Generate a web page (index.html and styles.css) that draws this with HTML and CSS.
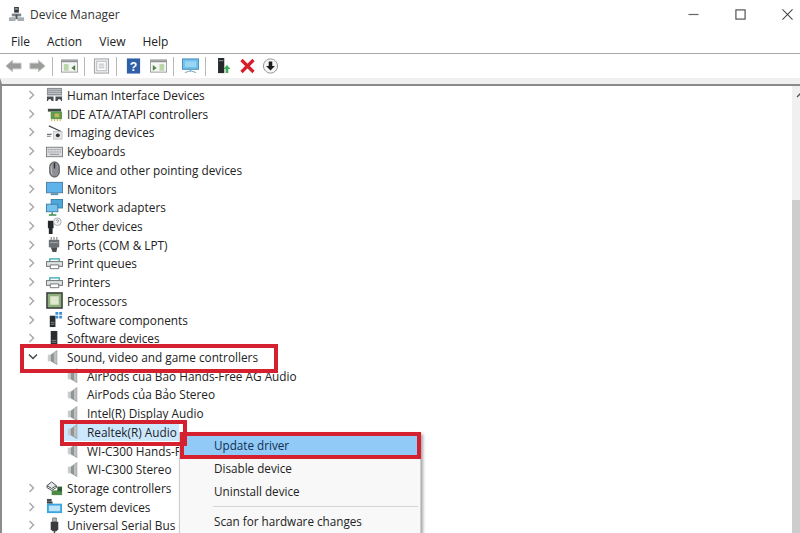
FILE: index.html
```html
<!DOCTYPE html>
<html lang="en">
<head>
<meta charset="utf-8">
<title>Device Manager</title>
<link rel="stylesheet" href="styles.css">
</head>
<body>
<svg class="defs" width="0" height="0" aria-hidden="true">
  <symbol id="chev" viewBox="0 0 8 10"><path d="M1.5 1l4 4-4 4" fill="none" stroke="#a6a6a6" stroke-width="1.4"/></symbol>
  <symbol id="spk" viewBox="0 0 16 18"><path d="M3 6h3v7H3z" fill="#c9cccc"/><path d="M6 6l7-5v16l-7-4z" fill="#8f9494"/><path d="M9.500 4l3-2v14l-3-2z" fill="#bcc0c0"/></symbol>
  <symbol id="hid" viewBox="0 0 18 18"><rect x="1" y="2" width="16" height="8" fill="#8b9096"/><path d="M2 4h14M2 6h14M2 8h14" stroke="#d5d8da" stroke-width=".8"/><path d="M1 11h7v5H6l-1-2-2 0-1 2H1zM10 11h7v5h-1l-1-2h-2l-1 2h-2z" fill="#4a4e52"/></symbol>
  <symbol id="ide" viewBox="0 0 18 18"><rect x="2" y="4" width="14" height="3" fill="#3d4a44"/><rect x="5" y="7" width="12" height="8" fill="#5f9a4e"/><rect x="9" y="9" width="5" height="4" fill="#c2b65a"/><path d="M6 15v2M9 15v2M12 15v2M15 15v2" stroke="#c7a93a"/></symbol>
  <symbol id="img" viewBox="0 0 18 18"><path d="M3 2l13 6" stroke="#4a4e52" stroke-width="1.2"/><path d="M1 11h5M1 13h4" stroke="#777" stroke-width="1.2"/><rect x="8" y="8" width="9" height="8" fill="#e4e6e8" stroke="#a8acb0" stroke-width=".6"/><circle cx="12.5" cy="12" r="2" fill="#2d3134"/></symbol>
  <symbol id="kbd" viewBox="0 0 18 18"><rect x=".5" y="4.500" width="17" height="10" fill="#d9dbdd" stroke="#7b7f83"/><path d="M2 7h14M2 9.500h14" stroke="#8d9195" stroke-dasharray="1 .6"/><path d="M4 12h10" stroke="#8d9195"/></symbol>
  <symbol id="mouse" viewBox="0 0 18 18"><rect x="4" y="1" width="10" height="16" rx="5" fill="#8d9195" stroke="#3f4347"/><path d="M9 2v6" stroke="#2e3235" stroke-width="1.5"/><path d="M5.500 5c0 6 0 6 1 9" stroke="#c9cccf" fill="none"/></symbol>
  <symbol id="mon" viewBox="0 0 18 18"><rect x=".5" y="2.500" width="17" height="11" fill="#5eb4ea" stroke="#4a7fa6"/><path d="M5 15h8" stroke="#5b8fb0" stroke-width="2"/></symbol>
  <symbol id="net" viewBox="0 0 18 18"><rect x="5.500" y=".5" width="12" height="9" fill="#4fa8dc" stroke="#3a7fa8"/><rect x=".5" y="5.500" width="12" height="8" fill="#76c4ee" stroke="#3a7fa8"/><path d="M6.500 14v3M3 17h8" stroke="#3f8f4a" stroke-width="1.500"/></symbol>
  <symbol id="other" viewBox="0 0 18 18"><path d="M2 4h6v8H7v6H3v-6H2z" fill="#24282a"/><circle cx="12" cy="5" r="4" fill="#eef0f2" stroke="#9a9ea2" stroke-width=".8"/><path d="M10.800 4c.4-1.500 2.800-1.200 2.400.3-.2.800-1.200.8-1.200 1.700" fill="none" stroke="#6f7377" stroke-width=".8"/></symbol>
  <symbol id="port" viewBox="0 0 18 18"><path d="M5 1h1v3H5zM8 1h1v3H8zM11 1h1v3h-1z" fill="#66696c"/><rect x="3" y="4" width="11" height="8" fill="#6c7073"/><path d="M4 7h9" stroke="#a7aaad"/><path d="M5 12h7l-1 5H7z" fill="#4a4d50"/></symbol>
  <symbol id="prn" viewBox="0 0 18 18"><path d="M4 7V4h10v3" fill="#f2fafb" stroke="#35a4ae" stroke-width="1.300"/><rect x=".5" y="7" width="17" height="5" fill="#dfe2e3" stroke="#6d7174"/><path d="M4.500 10.500h9v4h-9z" fill="#fff" stroke="#6d7174"/></symbol>
  <symbol id="cpu" viewBox="0 0 18 18"><rect x="1" y="1" width="16" height="16" fill="#8fae7c" stroke="#2f3431" stroke-width="1.500"/><rect x="4.500" y="4.500" width="9" height="9" fill="#dfe8cf"/></symbol>
  <symbol id="swc" viewBox="0 0 18 18"><path d="M4 5h6v12H4z" fill="#2a2d30"/><path d="M5 12h4M5 14h4" stroke="#aaa" stroke-width=".7"/><path d="M10 1h3v3h-3zM14 1h3v3h-3zM10 5h3v3h-3zM14 5h3v3h-3z" fill="#3f8fd6"/></symbol>
  <symbol id="swd" viewBox="0 0 18 18"><path d="M5 1h7v16H5z" fill="#2a2d30"/><path d="M6 11h5M6 13h5" stroke="#aaa" stroke-width=".7"/></symbol>
  <symbol id="sto" viewBox="0 0 18 18"><path d="M1 6l5-4 5 4-5 3z" fill="#e6e8ea" stroke="#43474a"/><path d="M1 6v2l5 3 5-3V6" fill="none" stroke="#43474a"/><rect x="6" y="11" width="11" height="5" fill="#4d8c48"/><rect x="12" y="7" width="5" height="5" fill="#2f5f30"/></symbol>
  <symbol id="sys" viewBox="0 0 18 18"><path d="M1 4h6v2H1z" fill="#3d4144"/><rect x="1" y="6" width="16" height="10" fill="#3da5df"/><rect x="3" y="8" width="12" height="6" fill="#bfe4f7"/><rect x="1" y="1" width="5" height="3" fill="#4b4f52"/></symbol>
  <symbol id="usb" viewBox="0 0 18 18"><path d="M7 1h4v4H7z" fill="#b5b8bb" stroke="#55585b" stroke-width=".7"/><path d="M5 5h8v8l-2 2H7l-2-2z" fill="#3a3d40"/><path d="M9 15v3" stroke="#3a3d40" stroke-width="1.500"/></symbol>
</svg>

<div class="app">
  <header class="titlebar">
    <svg class="appicon" viewBox="0 0 16 16"><path d="M5.500 0h5v6h-5z" fill="#33383c"/><path d="M6.500 1h3v2h-3z" fill="#8a9096"/><path d="M3 7h10v3H3z" fill="#7d8388"/><path d="M0 11h7v4H0zM9 11h7v4H9z" fill="#a8adb1"/><path d="M7 8h2v5H7z" fill="#4f5559"/></svg>
    <span class="title">Device Manager</span>
    <div class="winctl">
      <svg class="wc" viewBox="0 0 12 12"><path d="M.5 6h11" stroke="#666" stroke-width="1.300"/></svg>
      <svg class="wc" viewBox="0 0 12 12"><rect x="1" y="1" width="10" height="10" fill="none" stroke="#444" stroke-width="1.200"/></svg>
      <svg class="wc" viewBox="0 0 12 12"><path d="M.5.5l11 11M11.500.5l-11 11" stroke="#444" stroke-width="1.100"/></svg>
    </div>
  </header>

  <nav class="menubar">
    <span>File</span><span>Action</span><span>View</span><span>Help</span>
  </nav>

  <div class="toolbar">
    <svg class="tb tb-arrow" viewBox="0 0 18 16"><path d="M1 8l7-6v3h9v6H8v3z" fill="#9a9c9a" stroke="#bdbfbd"/></svg>
    <svg class="tb" viewBox="0 0 18 16"><path d="M17 8l-7-6v3H1v6h9v3z" fill="#9a9c9a" stroke="#bdbfbd"/></svg>
    <i class="sep"></i>
    <svg class="tb" viewBox="0 0 18 16"><rect x=".5" y="1.500" width="17" height="13" fill="#f4f5f4" stroke="#9a9d9f"/><path d="M1 2h16v2H1z" fill="#8d9194"/><path d="M3 6h5v7H3z" fill="#b9d6a8"/><path d="M15 7l-4 3 4 3z" fill="#4c7f3f"/></svg>
    <i class="sep"></i>
    <svg class="tb" viewBox="0 0 18 16"><rect x="1.500" y=".5" width="15" height="15" fill="#eeeff0" stroke="#9c9fa2"/><rect x="4" y="3" width="10" height="10" fill="#fff" stroke="#b2b5b8"/><path d="M6 6h6M6 8h6M6 10h6" stroke="#b2b5b8"/></svg>
    <i class="sep"></i>
    <svg class="tb" viewBox="0 0 18 16"><rect x="2" y="0" width="14" height="16" fill="#2f5fa8"/><text x="9" y="13" class="qm">?</text></svg>
    <svg class="tb tb-gap" viewBox="0 0 18 16"><rect x=".5" y="1.500" width="17" height="13" fill="#f4f5f4" stroke="#9a9d9f"/><path d="M1 2h16v2H1z" fill="#8d9194"/><path d="M10 6h5v7h-5z" fill="#b9d6a8"/><path d="M3 7l4 3-4 3z" fill="#4c7f3f"/></svg>
    <i class="sep"></i>
    <svg class="tb" viewBox="0 0 18 16"><rect x=".5" y=".5" width="17" height="11" fill="#6fc0ec" stroke="#4a8fb8"/><path d="M3 3h12v6H3z" fill="#9ad6f4"/><path d="M9 12v2M3 15l6-2 6 2" stroke="#6e9fbd" fill="none"/></svg>
    <i class="sep"></i>
    <svg class="tb" viewBox="0 0 18 18"><path d="M4 0h7v17H4z" fill="#25292b"/><path d="M5 3h5" stroke="#99aaaa"/><path d="M14 8l4 4.500h-2.500V17h-3v-4.500H10z" fill="#3fae5a"/></svg>
    <svg class="tb tb-gap" viewBox="0 0 16 16"><path d="M2 2l12 12M14 2L2 14" stroke="#d3202a" stroke-width="3.200"/></svg>
    <svg class="tb" viewBox="0 0 18 18"><circle cx="9" cy="9" r="8" fill="#f6f6f6" stroke="#8c8c8c"/><path d="M7 4h4v5h3l-5 5-5-5h3z" fill="#1d1d1d"/></svg>
  </div>

  <div class="panel">
    <ul class="tree">
      <li class="row"><svg class="chev"><use href="#chev"/></svg><svg class="ico"><use href="#hid"/></svg><span>Human Interface Devices</span></li>
      <li class="row"><svg class="chev"><use href="#chev"/></svg><svg class="ico"><use href="#ide"/></svg><span>IDE ATA/ATAPI controllers</span></li>
      <li class="row"><svg class="chev"><use href="#chev"/></svg><svg class="ico"><use href="#img"/></svg><span>Imaging devices</span></li>
      <li class="row"><svg class="chev"><use href="#chev"/></svg><svg class="ico"><use href="#kbd"/></svg><span>Keyboards</span></li>
      <li class="row"><svg class="chev"><use href="#chev"/></svg><svg class="ico"><use href="#mouse"/></svg><span>Mice and other pointing devices</span></li>
      <li class="row"><svg class="chev"><use href="#chev"/></svg><svg class="ico"><use href="#mon"/></svg><span>Monitors</span></li>
      <li class="row"><svg class="chev"><use href="#chev"/></svg><svg class="ico"><use href="#net"/></svg><span>Network adapters</span></li>
      <li class="row"><svg class="chev"><use href="#chev"/></svg><svg class="ico"><use href="#other"/></svg><span>Other devices</span></li>
      <li class="row"><svg class="chev"><use href="#chev"/></svg><svg class="ico"><use href="#port"/></svg><span>Ports (COM &amp; LPT)</span></li>
      <li class="row"><svg class="chev"><use href="#chev"/></svg><svg class="ico"><use href="#prn"/></svg><span>Print queues</span></li>
      <li class="row"><svg class="chev"><use href="#chev"/></svg><svg class="ico"><use href="#prn"/></svg><span>Printers</span></li>
      <li class="row"><svg class="chev"><use href="#chev"/></svg><svg class="ico"><use href="#cpu"/></svg><span>Processors</span></li>
      <li class="row"><svg class="chev"><use href="#chev"/></svg><svg class="ico"><use href="#swc"/></svg><span>Software components</span></li>
      <li class="row"><svg class="chev"><use href="#chev"/></svg><svg class="ico"><use href="#swd"/></svg><span>Software devices</span></li>
      <li class="row sound">
        <svg class="chev chev-open" viewBox="0 0 10 8"><path d="M1 1.500l4 4 4-4" fill="none" stroke="#444" stroke-width="1.400"/></svg>
        <svg class="ico"><use href="#spk"/></svg><span>Sound, video and game controllers</span>
      </li>
      <li class="row child"><svg class="ico"><use href="#spk"/></svg><span>AirPods của Bảo Hands-Free AG Audio</span></li>
      <li class="row child"><svg class="ico"><use href="#spk"/></svg><span>AirPods của Bảo Stereo</span></li>
      <li class="row child"><svg class="ico"><use href="#spk"/></svg><span>Intel(R) Display Audio</span></li>
      <li class="row child realtek"><svg class="ico"><use href="#spk"/></svg><span>Realtek(R) Audio</span></li>
      <li class="row child"><svg class="ico"><use href="#spk"/></svg><span>WI-C300 Hands-Free AG Audio</span></li>
      <li class="row child"><svg class="ico"><use href="#spk"/></svg><span>WI-C300 Stereo</span></li>
      <li class="row"><svg class="chev"><use href="#chev"/></svg><svg class="ico"><use href="#sto"/></svg><span>Storage controllers</span></li>
      <li class="row"><svg class="chev"><use href="#chev"/></svg><svg class="ico"><use href="#sys"/></svg><span>System devices</span></li>
      <li class="row"><svg class="chev"><use href="#chev"/></svg><svg class="ico"><use href="#usb"/></svg><span>Universal Serial Bus controllers</span></li>
    </ul>
    <div class="scrollbar">
      <div class="sb-track"><svg class="sb-up" viewBox="0 0 8 6"><path d="M1 5l3-3 3 3" fill="none" stroke="#555" stroke-width="1.300"/></svg></div>
      <div class="sb-thumb"></div>
    </div>
  </div>

  <div class="menu">
    <div class="item active">Update driver</div>
    <div class="item">Disable device</div>
    <div class="item">Uninstall device</div>
    <div class="divider"></div>
    <div class="item">Scan for hardware changes</div>
  </div>
  <div class="mark mark-sound"></div>
  <div class="mark mark-realtek"></div>
  <div class="mark mark-update"></div>
</div>
</body>
</html>
```
FILE: styles.css
```css
* { box-sizing: border-box; }
html, body { margin: 0; height: 100%; overflow: hidden; }
body { background: #fff; font-family: "Open Sans", "Noto Sans", sans-serif; color: #222; }
.defs { position: absolute; }

.app { position: relative; width: 800px; height: 533px; display: flex; flex-direction: column; overflow: hidden; }

.titlebar { height: 31px; display: flex; align-items: center; padding: 0 0 3px 9px; flex: none; }
.appicon { width: 15px; height: 15px; margin-right: 6px; }
.title { font-size: 12px; color: #333; }
.winctl { margin-left: auto; display: flex; gap: 36px; padding-right: 7px; }
.wc { width: 11px; height: 11px; display: block; }

.menubar { height: 23px; flex: none; display: flex; gap: 17px; padding: 0 0 2px 11px; align-items: center; font-size: 12px; color: #222; border-bottom: 1px solid #a8a8a8; }

.toolbar { height: 24px; flex: none; display: flex; align-items: center; padding-left: 5px; }
.tb { width: 17px; height: 16px; margin-right: 6px; flex: none; }
.tb-arrow { margin-right: 7px; }
.tb-gap { margin-left: 2px; }
.sep { width: 1px; height: 19px; background: #b8b8b8; margin-right: 8px; flex: none; }
.qm { font: bold 13px "Liberation Sans", sans-serif; fill: #fff; text-anchor: middle; }

.panel { flex: 1; min-height: 0; position: relative; display: flex; background: #fff; border-top: 6px solid #f0f0f0; border-left: 2px solid #8c8c8c; }
.panel::before { content: ""; position: absolute; left: -2px; right: 0; top: 0; height: 2px; background: #8a8a8a; }

.tree { list-style: none; margin: 0; padding: 1.6px 0 0 0; flex: 1; min-width: 0; }
.row { height: 18.72px; display: flex; align-items: center; font-size: 11.8px; color: #222; padding-left: 26px; white-space: nowrap; }
.row.child { padding-left: 62px; }
.chev { width: 8px; height: 10px; margin-right: 10px; flex: none; }
.chev-open { margin-right: 6px; width: 10px; height: 8px; }
.ico { width: 17px; height: 17px; margin-right: 4px; flex: none; }
.child .ico { margin-right: 6px; }
.sound .ico { margin-right: 6px; }
.row.child.realtek { width: fit-content; padding: 0 2px 0 0; margin-left: 62px; background: #cce8ff; }

.scrollbar { width: 8px; flex: none; display: flex; flex-direction: column; }
.sb-track { height: 116px; background: #f0f0f0; flex: none; padding: 8px 0 0 4px; }
.sb-up { width: 8px; height: 6px; display: block; }
.sb-thumb { flex: 1; background: #cdcdcd; }

.menu { position: absolute; left: 179px; top: 432px; width: 242px; height: 120px; background: #f8f8f8; box-shadow: 2px 2px 3px rgba(0, 0, 0, .35); border: 1px solid #ccc; padding: 3px 0 0 1px; font-size: 11.7px; color: #222; }
.item { height: 23px; line-height: 21px; padding-left: 33px; }
.item.active { background: #91c9f7; color: #12304f; height: 21px; line-height: 19px; margin-bottom: 1px; }
.divider { height: 1px; background: #d4d4d4; margin: 2px 2px 4px 32px; }

.mark { position: absolute; border: 4px solid #d5202f; pointer-events: none; }
.mark-sound { left: 20px; top: 344px; width: 258px; height: 29px; }
.mark-realtek { left: 60px; top: 420px; width: 127px; height: 26px; }
.mark-update { left: 180px; top: 432px; width: 241px; height: 27px; }
```
